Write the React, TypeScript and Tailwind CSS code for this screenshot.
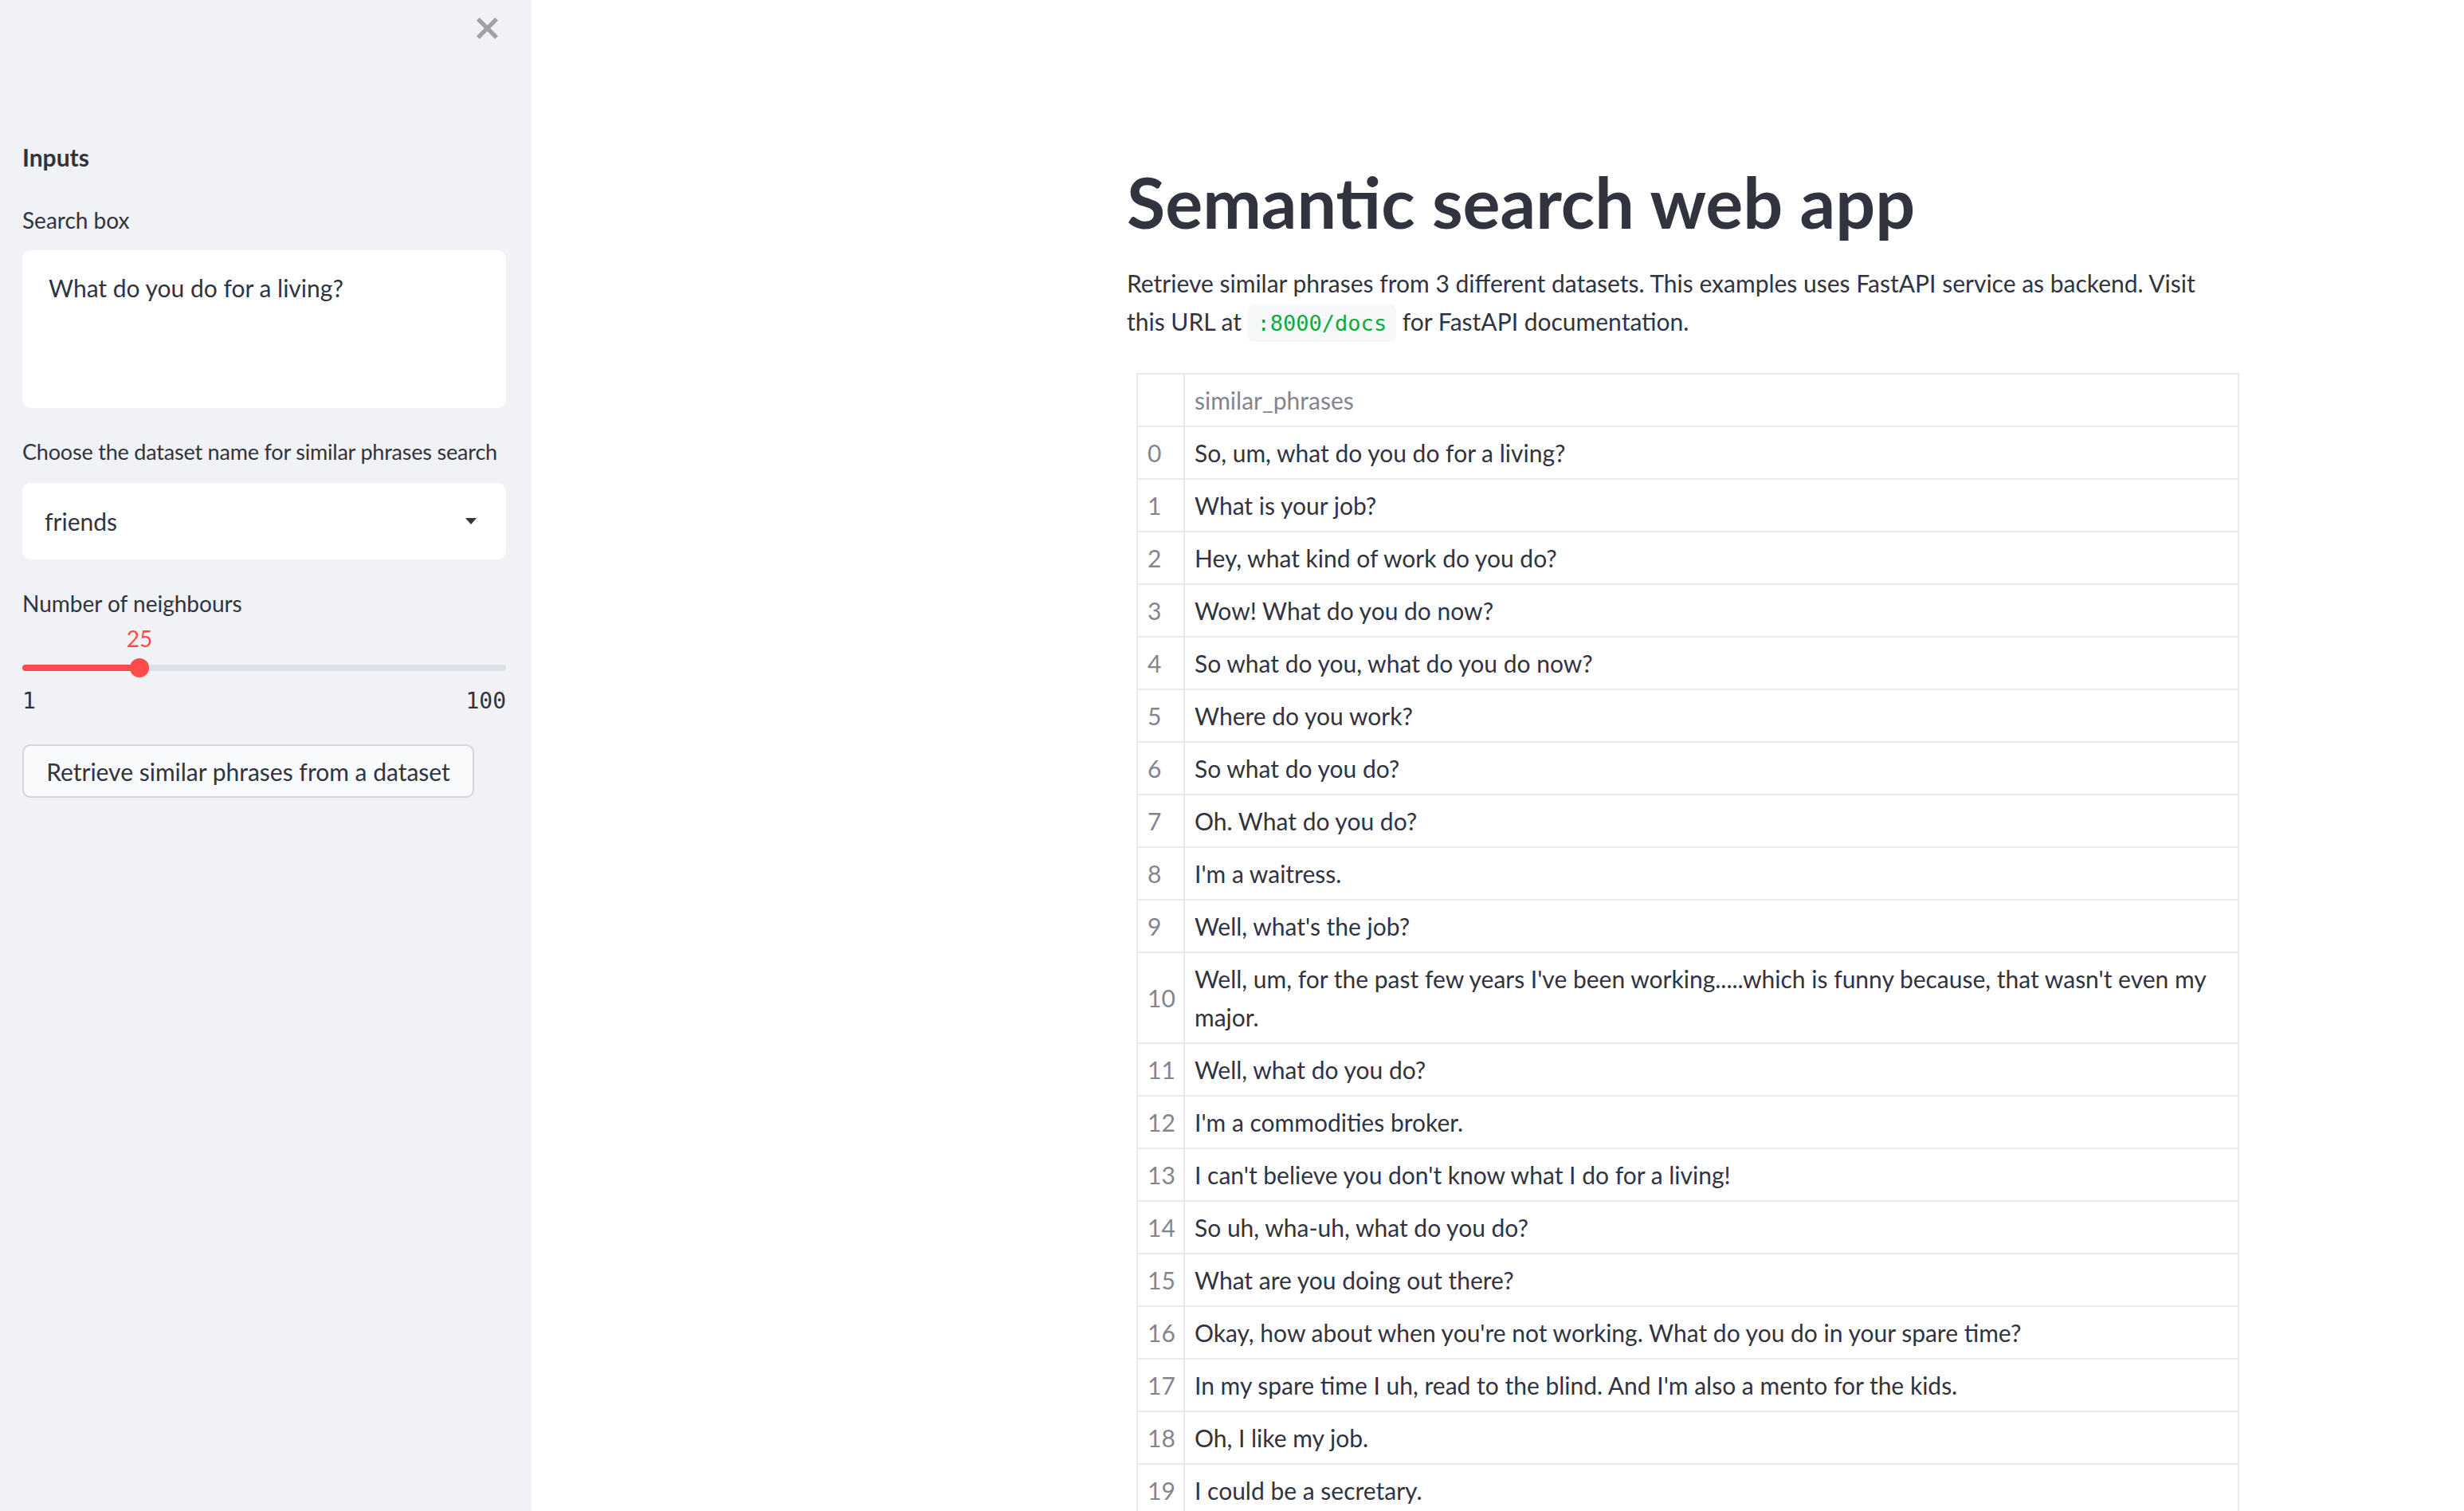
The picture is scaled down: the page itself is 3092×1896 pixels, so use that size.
import React from 'react';

const phrases: string[] = [
  'So, um, what do you do for a living?',
  'What is your job?',
  'Hey, what kind of work do you do?',
  'Wow! What do you do now?',
  'So what do you, what do you do now?',
  'Where do you work?',
  'So what do you do?',
  'Oh. What do you do?',
  "I'm a waitress.",
  "Well, what's the job?",
  "Well, um, for the past few years I've been working.....which is funny because, that wasn't even my major.",
  'Well, what do you do?',
  "I'm a commodities broker.",
  "I can't believe you don't know what I do for a living!",
  'So uh, wha-uh, what do you do?',
  'What are you doing out there?',
  "Okay, how about when you're not working. What do you do in your spare time?",
  "In my spare time I uh, read to the blind. And I'm also a mento for the kids.",
  'Oh, I like my job.',
  'I could be a secretary.',
];

function CloseIcon() {
  return (
    <svg width="27" height="27" viewBox="0 0 14 14">
      <path
        d="M14 1.95L12.05 0 7 5.05 1.95 0 0 1.95 5.05 7 0 12.05 1.95 14 7 8.95 12.05 14 14 12.05 8.95 7z"
        fill="#a0a1a6"
      />
    </svg>
  );
}

function Sidebar() {
  const value = 25;
  const fill = 147; // thumb x inside the track

  return (
    <aside className="h-full w-[667px] shrink-0 bg-[#f0f2f6] pl-[28px] pr-[32px]">
      <div className="flex justify-end pt-[22px] pr-[10px]">
        <CloseIcon />
      </div>

      <h2 className="mt-[124px] text-[30px] font-bold leading-[48px]">Inputs</h2>

      <label className="mt-[35px] block text-[28px] leading-[40px]">Search box</label>
      <div className="mt-[18px] h-[198px] rounded-[10px] bg-white px-[33px] pt-[23px] text-[30px] leading-[48px]">
        What do you do for a living?
      </div>

      <label className="mt-[35px] block whitespace-nowrap text-[27px] tracking-[-0.2px] leading-[40px]">
        Choose the dataset name for similar phrases search
      </label>
      <div className="mt-[19px] flex h-[96px] items-center justify-between rounded-[10px] bg-white pl-[28px] pr-[37px] text-[30px] leading-[48px]">
        <span>friends</span>
        <svg width="14" height="8" viewBox="0 0 14 8">
          <path d="M0 0H14L7 8Z" fill="#31333f" />
        </svg>
      </div>

      <label className="mt-[35px] block text-[28px] leading-[40px]">Number of neighbours</label>
      <div className="relative h-[83px]">
        <span
          className="absolute top-[4px] -translate-x-1/2 text-[28px] leading-[40px] text-[#ff4b4b]"
          style={{ left: fill }}
        >
          {value}
        </span>
        <div className="absolute left-0 right-0 top-[57px] h-[8px] rounded-full bg-[#dde0e7]">
          <div className="h-full rounded-full bg-[#ff4b4b]" style={{ width: fill }} />
        </div>
        <div
          className="absolute top-[49px] h-[24px] w-[24px] -translate-x-1/2 rounded-full bg-[#ff4b4b]"
          style={{ left: fill }}
        />
      </div>
      <div className="flex justify-between font-['DejaVu_Sans_Mono',monospace] text-[28px] leading-[40px]">
        <span>1</span>
        <span>100</span>
      </div>

      <button className="mt-[34px] h-[67px] w-[567px] rounded-[10px] border-2 border-[#d3d5da] bg-[#f9fafb] text-[30px] leading-[48px] text-[#31333f]">
        Retrieve similar phrases from a dataset
      </button>
    </aside>
  );
}

export default function App() {
  return (
    <div className="flex h-[1896px] w-[3092px] overflow-hidden bg-white font-['Lato',sans-serif] text-[#31333f]">
      <Sidebar />

      <main className="flex-1">
        <div className="ml-[747px] w-[1396px] pt-[203px]">
          <h1 className="text-[88px] font-bold leading-[100px]">Semantic search web app</h1>
          <p className="mt-[28px] text-[30px] leading-[48px]">
            Retrieve similar phrases from 3 different datasets. This examples uses FastAPI service as backend. Visit
            <br />
            this URL at{' '}
            <code className="rounded-[8px] bg-[#f6f7f9] px-[12px] py-[8px] font-['DejaVu_Sans_Mono',monospace] text-[27px] text-[#09ab3b]">
              :8000/docs
            </code>{' '}
            for FastAPI documentation.
          </p>

          <table className="ml-[12px] mt-[38px] w-[1384px] border-collapse text-left text-[30px] leading-[48px]">
            <thead>
              <tr>
                <th className="w-[59px] border-2 border-[#e8e9ec] py-[8px] pl-[12px] font-normal"></th>
                <th className="border-2 border-[#e8e9ec] py-[8px] pl-[12px] font-normal text-[#838590]">
                  similar_phrases
                </th>
              </tr>
            </thead>
            <tbody>
              {phrases.map((p, i) => (
                <tr key={i}>
                  <td className="border-2 border-[#e8e9ec] py-[8px] pl-[12px] text-[#838590]">{i}</td>
                  <td className="border-2 border-[#e8e9ec] py-[8px] pl-[12px] pr-[12px]">{p}</td>
                </tr>
              ))}
            </tbody>
          </table>
        </div>
      </main>
    </div>
  );
}
